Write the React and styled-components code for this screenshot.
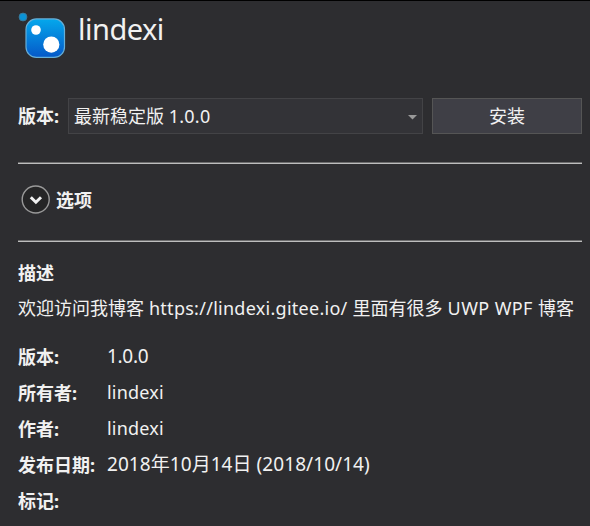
import React from "react";
import styled, { createGlobalStyle } from "styled-components";

const GlobalStyle = createGlobalStyle`
  * { box-sizing: border-box; }
  html, body { margin: 0; background: #2d2d30; }
`;

const Panel = styled.main`
  width: 590px;
  height: 526px;
  padding: 0 8px 0 18px;
  overflow: hidden;
  background: #2d2d30;
  border-top: 1px solid #000;
  color: #f1f1f1;
  font-family: "Noto Sans", "Noto Sans CJK SC", sans-serif;
  font-size: 18px;
  line-height: 36px;
  white-space: nowrap;
`;

const Header = styled.header`
  display: flex;
  height: 97px;
`;

const Logo = styled.svg`
  display: block;
  width: 48px;
  height: 48px;
  margin-top: 10px;
`;

const Title = styled.h1`
  margin: 8px 0 0 12px;
  font-size: 29px;
  font-weight: 400;
  line-height: 40px;
  letter-spacing: -0.5px;
`;

const Latin = styled.span`
  letter-spacing: ${(p) => p.$track || 0}px;
`;

const Value = styled.span`
  font-size: ${(p) => p.$size || 18}px;
  line-height: ${(p) => p.$line || 34}px;
  letter-spacing: ${(p) => p.$track || 0}px;
`;

const Toolbar = styled.div`
  display: flex;
  height: 36px;
`;

const Label = styled.span`
  flex: none;
  width: ${(p) => p.$width}px;
  font-weight: 700;
`;

const Select = styled.button`
  display: flex;
  align-items: center;
  justify-content: space-between;
  width: 355px;
  height: 36px;
  margin-right: 9px;
  padding: 0 5px;
  background: #333337;
  border: 1px solid #434346;
  color: inherit;
  font: inherit;
`;

const Arrow = styled.svg`
  display: block;
  width: 9px;
  height: 5px;
  margin-top: 2px;
`;

const InstallButton = styled.button`
  width: 150px;
  height: 36px;
  padding: 0;
  background: #3f3f46;
  border: 1px solid #555555;
  color: inherit;
  font: inherit;
  line-height: 34px;
`;

const Divider = styled.hr`
  height: 2px;
  margin: ${(p) => p.$top}px 0 0;
  border: 0;
  border-top: 1px solid #6d6d6e;
  background: #bdbdbd;
`;

const Options = styled.div`
  display: flex;
  align-items: center;
  height: 36px;
  margin-top: 18px;
  padding-left: 3px;
  font-weight: 700;
`;

const Chevron = styled.svg`
  display: block;
  width: 30px;
  height: 30px;
  margin-right: 5px;
`;

const Heading = styled.h2`
  margin: 13px 0 0;
  font-size: 18px;
  font-weight: 700;
  line-height: 36px;
`;

const Description = styled.p`
  margin: 0;
  line-height: 35px;
`;

const Details = styled.div`
  margin-top: 13px;
`;

const Row = styled.div`
  display: flex;
  height: 36px;
`;

const details = [
  { label: "版本:", value: "1.0.0", track: -0.3, size: 19 },
  { label: "所有者:", value: "lindexi", track: 0.2 },
  { label: "作者:", value: "lindexi", track: 0.2 },
  { label: "发布日期:", value: "2018年10月14日 (2018/10/14)", track: 0.06, size: 19, line: 35 },
  { label: "标记:", value: "" },
];

export default function App() {
  return (
    <Panel>
      <GlobalStyle />
      <Header>
        <Logo viewBox="0 0 48 48">
          <defs>
            <linearGradient id="cube" x1="0" y1="0" x2="0" y2="1">
              <stop offset="0" stopColor="#04a8ec" />
              <stop offset="1" stopColor="#0558c8" />
            </linearGradient>
          </defs>
          <circle cx="5" cy="6" r="3.9" fill="#0a93d6" stroke="#397a9c" />
          <rect x="8" y="7.9" width="38.5" height="38.5" rx="10.5" fill="url(#cube)" stroke="#65afd9" strokeWidth="1.2" />
          <circle cx="18" cy="19" r="4.8" fill="#fff" />
          <circle cx="33.3" cy="33.6" r="8.1" fill="#fff" />
        </Logo>
        <Title>lindexi</Title>
      </Header>
      <Toolbar>
        <Label $width={50}>版本:</Label>
        <Select>
          <span>最新稳定版 <Latin $track={0.25}>1.0.0</Latin></span>
          <Arrow viewBox="0 0 9 5"><path d="M0 0h9L4.5 4.5z" fill="#999" /></Arrow>
        </Select>
        <InstallButton>安装</InstallButton>
      </Toolbar>
      <Divider $top={28} />
      <Options>
        <Chevron viewBox="0 0 30 30">
          <circle cx="14.7" cy="14.5" r="13.5" fill="#252526" stroke="#999" strokeWidth="1.4" />
          <path d="M9.8 12.2l5.1 5 5.1-5" fill="none" stroke="#f1f1f1" strokeWidth="3" />
        </Chevron>
        选项
      </Options>
      <Divider $top={22} />
      <Heading>描述</Heading>
      <Description>
        欢迎访问我博客<Latin $track={0.27}> https://lindexi.gitee.io/ </Latin>里面有很多<Latin $track={0.4}> UWP WPF </Latin>博客
      </Description>
      <Details>
        {details.map(({ label, value, track, size, line }) => (
          <Row key={label}>
            <Label $width={89}>{label}</Label>
            <Value $track={track} $size={size} $line={line}>{value}</Value>
          </Row>
        ))}
      </Details>
    </Panel>
  );
}
